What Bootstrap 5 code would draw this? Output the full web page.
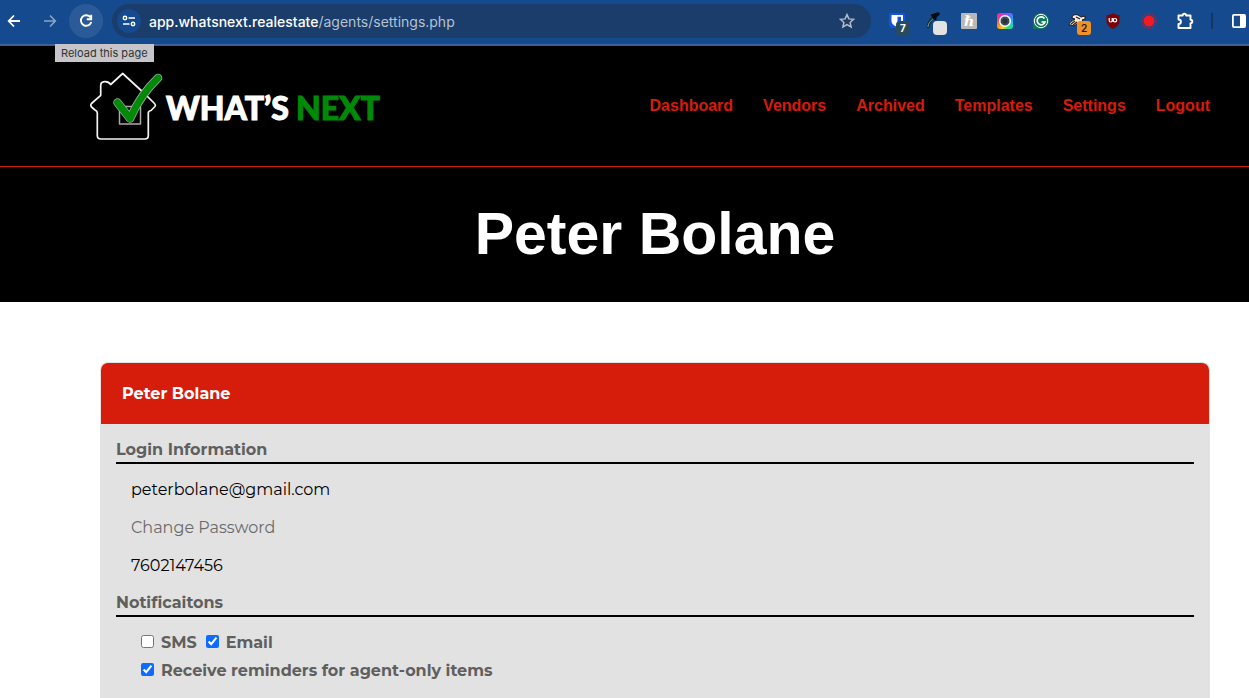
<!DOCTYPE html>
<html lang="en">
<head>
<meta charset="utf-8">
<meta name="viewport" content="width=device-width, initial-scale=1">
<title>Settings - What's Next</title>
<link href="https://cdn.jsdelivr.net/npm/bootstrap@5.3.0/dist/css/bootstrap.min.css" rel="stylesheet">
<style>
body { font-family: Montserrat, Inter, sans-serif; color: #000; background: #fff; }
.browser-bar { background: #164a8e; height: 45px; border-bottom: 1px solid #3d669f; padding-bottom: 2px; font-family: Inter, sans-serif; }
.tool { background: none; border: 0; padding: 0; width: 36px; height: 34px; display: flex; align-items: center; justify-content: center; flex: none; color: #fff; }
.tool-back { width: 28px; }
.tool-panel { width: 20px; }
.tool-reload { width: 34px; border-radius: 50%; background: #2b5a98; margin-left: 1px; }
.address { background: #1a3d6b; height: 34px; border-radius: 17px; padding-left: 5px; padding-right: 6px; margin-left: 9px; margin-right: 8px; min-width: 0; }
.site-info { width: 24px; height: 24px; border-radius: 50%; background: #164a8e; }
.url { font-size: 14px; color: #b5c2d3; margin-left: 8px; white-space: nowrap; overflow: hidden; }
.url b { color: #fff; font-weight: 500; }
.camera { width: 16px; height: 16px; border-radius: 3px; background: conic-gradient(#b03df5, #5a6dff, #1fa8f8, #1fd8c8, #3ddc62, #f5d21b, #ff8a1c, #ff3c5c, #f02ca8, #b03df5); }
.bar-divider { width: 2px; height: 16px; background: #123764; margin: 0 16px 0 8px; }
.reload-tip { position: absolute; top: 44px; left: 55px; background: #c6c6ca; color: #333; font: 11px/18px Inter, sans-serif; padding: 0 6px; }
.site-head { background: #000; border-top: 1px solid #c32a1c; border-bottom: 1px solid #d61c0a; height: 122px; padding-left: 88px; padding-right: 39px; }
.brand-text { font: 900 32px/40px Lato, sans-serif; color: #fff; gap: 7px; -webkit-text-stroke: 1px currentColor; padding-top: 4px; }
.brand-next { color: #008a08; }
.site-nav { gap: 30px; font: bold 16px/24px "Liberation Sans", sans-serif; }
.site-nav a { color: #d61c0a; text-decoration: none; }
.hero { background: #000; padding: 31px 39px 32px 100px; }
.hero h1 { font: bold 59px/72px "Liberation Sans", sans-serif; color: #fff; margin: 0; }
.page-main { padding: 60px 39px 0 100px; }
.panel { background: #e2e2e2; border: 1px solid #e2e2e2; border-bottom: 0; border-radius: 8px 8px 0 0; }
.panel .card-header { background: #d61c0a; color: #fff; border: 0; border-radius: 7px 7px 0 0; padding: 19px 21px 18px; font-size: 16px; line-height: 24px; font-weight: 700; }
.panel .card-body { padding: 14px 15px 12px; }
.group-title { color: #5f5f5f; font-size: 16px; line-height: 24px; font-weight: 700; border-bottom: 2px solid #000; margin: 0; }
.info { padding: 7px 15px 6px; font-size: 16px; line-height: 38px; }
.info a { color: #6b6b6b; text-decoration: none; }
.choices { padding: 12px 25px 0; color: #5f5f5f; font-size: 16px; line-height: 28px; font-weight: 700; }
.choices label { display: flex; align-items: center; gap: 7px; }
.choices input { width: 13px; height: 13px; margin: 0 0 3px; accent-color: #0b6cff; }
.options { gap: 9px; }
</style>
</head>
<body class="d-flex flex-column min-vh-100">
<div class="browser-bar d-flex align-items-center position-relative">
  <button class="tool tool-back" aria-label="Back"><svg width="16" height="16" viewBox="0 0 16 16" fill="none" stroke="currentColor" stroke-width="1.8"><path d="M14 8H3M8 2.500 2.700 8 8 13.500"/></svg></button>
  <button class="tool ms-1 opacity-50" aria-label="Forward"><svg width="16" height="16" viewBox="0 0 16 16" fill="none" stroke="currentColor" stroke-width="1.600"><path d="M2 8h11M8 2.500 13.300 8 8 13.500"/></svg></button>
  <button class="tool tool-reload" aria-label="Reload"><svg width="16" height="16" viewBox="0 0 16 16" fill="none" stroke="currentColor" stroke-width="1.900"><path d="M12.600 4.500A5.300 5.300 0 1 0 13.300 9"/><path d="M13.200 1.800v4.400H8.800" /></svg></button>
  <div class="address d-flex align-items-center flex-grow-1">
    <button class="tool site-info" aria-label="Site information"><svg width="14" height="14" viewBox="0 0 14 14" fill="none" stroke="currentColor" stroke-width="1.500"><circle cx="3" cy="4" r="1.700"/><path d="M6.500 4H13M1 10h6.500"/><circle cx="11" cy="10" r="1.700"/></svg></button>
    <div class="url flex-grow-1"><b>app.whatsnext.realestate</b>/agents/settings.php</div>
    <button class="tool" aria-label="Bookmark"><svg width="16" height="16" viewBox="0 0 16 16" fill="none" stroke="#b5bcc8" stroke-width="1.500"><path d="m8 1.600 1.900 4.300 4.700.400-3.500 3.100 1 4.600L8 11.600l-4.100 2.400 1-4.600-3.500-3.100 4.700-.400z"/></svg></button>
  </div>
  <button class="tool" aria-label="Password manager"><svg width="36" height="34" viewBox="0 0 36 34"><rect x="10" y="9" width="16" height="15" rx="2" fill="#1752dc"/><path d="M12.500 11h11.500v6c0 3-3 5-5.500 6-3-1-6-3-6-6z" fill="#fff"/><path d="M18.500 12.700H22v4.500c0 2-1.600 3.200-3.500 4z" fill="#1752dc"/><rect x="17" y="17" width="14" height="14" rx="4" fill="#294b5c"/><text x="24" y="28" text-anchor="middle" font-size="10" font-weight="700" fill="#fff" font-family="Inter">7</text></svg></button>
  <button class="tool" aria-label="Colour picker"><svg width="36" height="34" viewBox="0 0 36 34"><path d="M21 12c-5 3-8 6-8 12" fill="none" stroke="#102d35" stroke-width="3"/><path d="M19 14c-4 3-6 6-6 9" fill="none" stroke="#8eab91" stroke-width="1"/><path d="m16 11 3-1 3-1c2-1 3 1 2 2l-3 2v3l-2-1z" fill="#070b10" stroke="#070b10"/><rect x="18" y="17" width="14" height="14" rx="4" fill="#e3e3e3"/></svg></button>
  <button class="tool" aria-label="Coupons"><svg width="16" height="16" viewBox="0 0 16 16"><rect width="16" height="16" rx="1" fill="#b8b8b8"/><text x="8" y="13" text-anchor="middle" font-size="14" font-weight="700" fill="#fff" font-family="DejaVu Serif">ℏ</text></svg></button>
  <button class="tool" aria-label="Camera"><span class="camera d-flex"><svg width="16" height="16" viewBox="0 0 16 16"><circle cx="8" cy="8" r="5.300" fill="#3d4b56" stroke="#fff" stroke-width="1.500"/><circle cx="8" cy="8" r="2.500" fill="#26313b"/></svg></span></button>
  <button class="tool" aria-label="Grammar"><svg width="16" height="16" viewBox="0 0 16 16"><path d="M0 16V8a8 8 0 1 1 8 8z" fill="#11795b"/><circle cx="8" cy="8" r="6.700" fill="none" stroke="#fff" stroke-width="1"/><path d="M11.400 5.400A4 4 0 1 0 12 9H8.500" fill="none" stroke="#fff" stroke-width="1.700"/></svg></button>
  <button class="tool" aria-label="Privacy"><svg width="36" height="34" viewBox="0 0 36 34"><path d="M10 21c1-4 4-4 6-6l-3-1c0-3 3-4 6-3l3 2 4-1v3l-3 1 2 2-6 1-4 3-3-1z" fill="#f5e9dc" stroke="#1b1b1b" stroke-width="1"/><path d="m12 20 4-3m1-4 4 2m-7 6 4-3" stroke="#35190f" stroke-width="1.200"/><rect x="18" y="17" width="14" height="14" rx="3" fill="#ee9228"/><text x="25" y="28" text-anchor="middle" font-size="10" font-weight="600" fill="#1d1d1d" font-family="Inter">2</text></svg></button>
  <button class="tool" aria-label="Ad blocker"><svg width="16" height="16" viewBox="0 0 16 16"><path d="M8 0c2 1.400 4 2 6.500 2v6c0 4-3 6-6.500 8-3.500-2-6.500-4-6.500-8V2C4 2 6 1.400 8 0z" fill="#7c0408"/><path d="M4.200 5v2.500c0 2 3 2 3 0V5M8.200 5.500v3.300" fill="none" stroke="#fff" stroke-width="1.200"/><circle cx="10" cy="7.200" r="1.700" fill="none" stroke="#fff" stroke-width="1.200"/></svg></button>
  <button class="tool" aria-label="Recorder"><svg width="16" height="16" viewBox="0 0 16 16"><circle cx="8" cy="8" r="5.500" fill="#f21a20"/><circle cx="8" cy="8" r="7.300" fill="none" stroke="#a02242" stroke-width="1"/></svg></button>
  <button class="tool" aria-label="Extensions"><svg width="18" height="18" viewBox="0 0 18 18" fill="none" stroke="currentColor" stroke-width="1.900" stroke-linejoin="round"><path d="M2.500 3.500h4.200a1.700 1.700 0 0 1 3.400 0h4.400v4.200a1.800 1.800 0 0 1 0 3.600v4.700h-12v-4c3.200 0 3.200-4.500 0-4.500z"/></svg></button>
  <span class="bar-divider flex-shrink-0"></span>
  <button class="tool tool-panel" aria-label="Side panel"><svg width="16" height="16" viewBox="0 0 16 16"><rect x="1.900" y="1.900" width="12.200" height="12.200" rx="1" fill="none" stroke="#fff" stroke-width="1.800"/><path d="M9 2h5v12H9z" fill="#fff"/></svg></button>
  <span class="reload-tip">Reload this page</span>
</div>

<header class="site-head d-flex align-items-center justify-content-between">
  <a href="#" class="d-flex align-items-center text-decoration-none" aria-label="What's Next">
    <svg width="78" height="72" viewBox="0 0 78 72" fill="none" stroke-linejoin="round">
      <path d="M34.700 3.500 22.700 14.500C20 10.500 12.700 10.500 12.700 15.500V25.300L3.500 33.500Q2 35 3.500 37L7 40Q9.300 41 9.300 43V65.500Q9.300 69 13 69H57Q60.300 69 60.300 65.500V43Q60.300 41 63 40.500L67 36.500Q68 35 66.500 33.500L57 24Z" stroke="#f4f4f4" stroke-width="1.700"/>
      <path d="M31.500 36.500v17.500h21V36.500z" stroke="#aaa" stroke-width="1.500"/>
      <path d="M29.500 32.500 42 48.500Q53 24 70 8" stroke="#a8b8a8" stroke-width="8.500" stroke-linecap="round"/>
      <path d="M29.500 32.500 42 48.500Q53 24 70 8" stroke="#008a08" stroke-width="7" stroke-linecap="round"/>
    </svg>
    <span class="brand-text d-flex"><span>WHAT’S</span><span class="brand-next">NEXT</span></span>
  </a>
  <nav class="site-nav d-flex">
    <a href="#">Dashboard</a><a href="#">Vendors</a><a href="#">Archived</a><a href="#">Templates</a><a href="#">Settings</a><a href="#">Logout</a>
  </nav>
</header>

<section class="hero text-center"><h1>Peter Bolane</h1></section>

<main class="page-main d-flex flex-column flex-grow-1">
  <div class="card panel flex-grow-1">
    <div class="card-header">Peter Bolane</div>
    <div class="card-body">
      <h2 class="group-title">Login Information</h2>
      <div class="info">
        <div>peterbolane@gmail.com</div>
        <div><a href="#">Change Password</a></div>
        <div>7602147456</div>
      </div>
      <h2 class="group-title">Notificaitons</h2>
      <form class="choices">
        <div class="options d-flex">
          <label for="sms"><input type="checkbox" id="sms">SMS</label>
          <label for="email"><input type="checkbox" id="email" checked>Email</label>
        </div>
        <div class="d-flex"><label for="agent"><input type="checkbox" id="agent" checked>Receive reminders for agent-only items</label></div>
      </form>
    </div>
  </div>
</main>
<script src="https://cdn.jsdelivr.net/npm/bootstrap@5.3.0/dist/js/bootstrap.bundle.min.js"></script>
</body>
</html>
